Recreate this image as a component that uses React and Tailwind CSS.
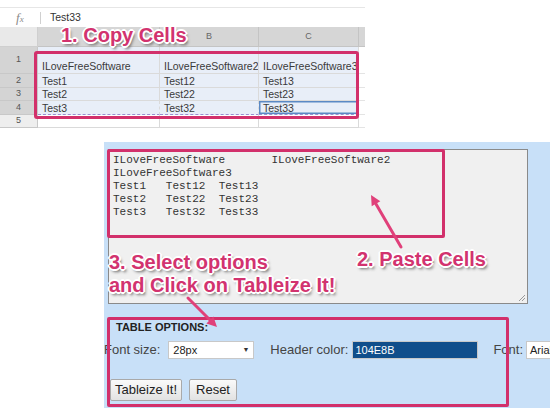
export default function App() {
  const labelCls =
    "absolute font-bold text-[20px] text-[#d2336f] whitespace-nowrap [text-shadow:-1px_-1px_0_#fff,1px_-1px_0_#fff,-1px_1px_0_#fff,1px_1px_0_#fff,0_-2px_0_#fff,0_2px_0_#fff,-2px_0_0_#fff,2px_0_0_#fff,2px_3px_3px_#666]";
  const cols = [38, 122, 99, 100, 6];
  const rows = [
    { n: "1", h: 27, cells: ["ILoveFreeSoftware", "ILoveFreeSoftware2", "ILoveFreeSoftware3"] },
    { n: "2", h: 14, cells: ["Test1", "Test12", "Test13"] },
    { n: "3", h: 13, cells: ["Test2", "Test22", "Test23"] },
    { n: "4", h: 14, cells: ["Test3", "Test32", "Test33"] },
    { n: "5", h: 13, cells: ["", "", ""] },
  ];
  const pasted = [
    "ILoveFreeSoftware\tILoveFreeSoftware2",
    "ILoveFreeSoftware3",
    "Test1\tTest12\tTest13",
    "Test2\tTest22\tTest23",
    "Test3\tTest32\tTest33",
  ];
  return (
    <div className="relative w-[550px] h-[408px] overflow-hidden bg-white font-['Liberation_Sans',Arial,sans-serif]">
      {/* Spreadsheet */}
      <div className="w-[365px] pt-[7px]">
        <div className="flex h-[20px] items-center border-t border-[#e6e6e6]">
          <span className="w-[40px] pl-[16px] font-['Liberation_Serif',serif] italic text-[13px] leading-none text-[#8a8a8a]">
            f<span className="text-[9px]">x</span>
          </span>
          <span className="h-[12px] border-l border-[#d0d0d0]"></span>
          <span className="pl-[9px] text-[10.5px] text-[#333]">Test33</span>
        </div>
        <div className="flex h-[20px] text-[9px] text-[#666]">
          <div className="w-[38px] bg-[#e9e9e9] border-r border-b border-[#cfcfcf]"></div>
          <div className="w-[122px] bg-[#d6d6d6] border-r border-b border-[#c4c4c4]"></div>
          <div className="w-[99px] bg-[#d6d6d6] border-r border-b border-[#c4c4c4] flex items-center justify-center">B</div>
          <div className="w-[100px] bg-[#d6d6d6] border-r border-b border-[#c4c4c4] flex items-center justify-center">C</div>
          <div className="w-[6px] bg-[#d6d6d6] border-b border-[#c4c4c4]"></div>
        </div>
        {rows.map((r, ri) => {
          const sel = ri < 4;
          return (
            <div key={r.n} className="flex" style={{ height: r.h }}>
              <div
                className={
                  "w-[38px] flex items-center justify-center text-[9px] text-[#555] border-r border-b border-[#c8c8c8] " +
                  (sel ? "bg-[#d4d4d4]" : "bg-[#eeeeee]")
                }
              >
                {r.n}
              </div>
              {r.cells.map((c, ci) => {
                const active = ri === 3 && ci === 2;
                return (
                  <div
                    key={ci}
                    className={
                      "flex px-[4px] text-[10.5px] leading-[12px] text-[#3a3a3a] border-r border-b border-[#dadada] overflow-hidden whitespace-nowrap " +
                      (ri === 0 ? "items-end pb-[1px] " : "items-center ") +
                      (sel ? "bg-[#e8eef8] " : "bg-white ") +
                      (active ? "shadow-[inset_0_0_0_1.5px_#5b89c4] " : "") +
                      (ri === 3 ? "border-b-[#9a8fd0] border-dashed " : "")
                    }
                    style={{ width: cols[ci + 1] }}
                  >
                    {c}
                  </div>
                );
              })}
              <div className="w-[6px] bg-white border-b border-[#e4e4e4]"></div>
            </div>
          );
        })}
      </div>

      {/* Tableizer panel */}
      <div className="ml-[104px] mt-[14px] h-[266px] bg-[#c8e0f8] pt-[7px]">
        <div className="relative ml-[4px] w-[420px] h-[155px] bg-[#f0f0f0] border border-[#8a8a8a] pl-[4px] pt-[4px]">
          <div className="font-['Liberation_Mono','Courier_New',monospace] text-[11px] leading-[13px] text-[#333] whitespace-pre [tab-size:8]">
            {pasted.join("\n")}
          </div>
          <svg className="absolute right-[1px] bottom-[1px]" width="8" height="8" viewBox="0 0 8 8">
            <path d="M7 1 L1 7 M7 4 L4 7" stroke="#999" strokeWidth="1" />
          </svg>
        </div>
        <div className="ml-[12px] mt-[17px] text-[11px] leading-[13px] font-bold text-[#222]">TABLE OPTIONS:</div>
        <div className="mt-[7px] flex h-[18px] items-center text-[13px] text-[#444] whitespace-nowrap">
          <span className="shrink-0">Font size:</span>
          <div className="shrink-0 ml-[8px] w-[86px] h-[18px] bg-white border border-[#c8c8c8] flex items-center justify-between px-[4px] text-[11px] text-[#222]">
            <span>28px</span>
            <span className="text-[7px] text-[#333]">▼</span>
          </div>
          <span className="shrink-0 ml-[16px]">Header color:</span>
          <div className="shrink-0 ml-[4px] w-[126px] h-[18px] bg-[#104e8b] border border-[#c8c8c8] flex items-center px-[2px] text-[11px] text-white">
            104E8B
          </div>
          <span className="shrink-0 ml-[15px]">Font:</span>
          <div className="shrink-0 ml-[3px] w-[60px] h-[18px] bg-white border border-[#c8c8c8] flex items-center px-[3px] text-[11px] text-[#222]">
            Arial
          </div>
        </div>
        <div className="ml-[6px] mt-[20px] flex gap-[7px] text-[13px] text-[#222]">
          <div className="w-[72px] h-[22px] flex items-center justify-center border border-[#a9a9a9] rounded-[2px] bg-gradient-to-b from-[#fafafa] to-[#e2e2e2]">
            Tableize It!
          </div>
          <div className="w-[48px] h-[22px] flex items-center justify-center border border-[#a9a9a9] rounded-[2px] bg-gradient-to-b from-[#fafafa] to-[#e2e2e2]">
            Reset
          </div>
        </div>
      </div>

      {/* Annotations */}
      <div className="absolute left-[34px] top-[51px] w-[325px] h-[68px] border-[3px] border-[#d2306b] rounded-[3px]"></div>
      <div className="absolute left-[107px] top-[149px] w-[338px] h-[89px] border-[3px] border-[#d2306b] rounded-[2px]"></div>
      <div className="absolute left-[107px] top-[317px] w-[402px] h-[90px] border-[3px] border-[#d2306b] rounded-[2px]"></div>

      <div className={labelCls + " left-[61px] top-[23px] leading-[24px]"}>1. Copy Cells</div>
      <div className={labelCls + " left-[357px] top-[247px] leading-[24px]"}>2. Paste Cells</div>
      <div className={labelCls + " left-[109px] top-[251px] leading-[23px]"}>
        3. Select options
        <br />
        and Click on Tableize It!
      </div>

      <svg className="absolute left-0 top-0 pointer-events-none" width="550" height="408" viewBox="0 0 550 408">
        <line x1="401" y1="247" x2="376" y2="204" stroke="#e0407a" strokeWidth="3" strokeLinecap="round" />
        <polygon points="371,195 380.3,201.2 371.7,206.2" fill="#e0407a" />
        <line x1="188" y1="298" x2="210" y2="320" stroke="#e0407a" strokeWidth="3" strokeLinecap="round" />
        <polygon points="217,327 206.4,323.4 213.4,316.4" fill="#e0407a" />
      </svg>
    </div>
  );
}
